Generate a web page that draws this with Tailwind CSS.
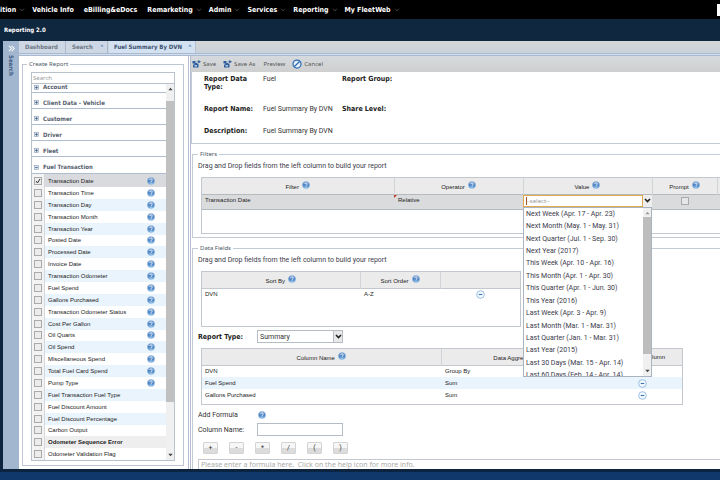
<!DOCTYPE html>
<html lang="en">
<head>
<meta charset="utf-8">
<title>Reporting 2.0</title>
<script src="https://cdn.jsdelivr.net/npm/@tailwindcss/browser@4"></script>
</head>
<body class="flex h-screen flex-col overflow-hidden bg-[#10284a] font-['Roboto','Liberation_Sans',sans-serif] text-[7px] leading-[8px] text-[#333]">
<svg class="absolute h-0 w-0" aria-hidden="true">
  <defs>
    <linearGradient id="ball" x1="0" y1="0" x2="0" y2="1"><stop offset="0" stop-color="#7ba6d6"/><stop offset=".5" stop-color="#4a80c0"/><stop offset="1" stop-color="#8cc4ee"/></linearGradient>
  </defs>
  <symbol id="help" viewBox="0 0 16 16"><circle cx="8" cy="8" r="7.2" fill="url(#ball)" stroke="#8fb4dc"/><path d="M5.500 6.200C5.500 2.800 10.800 3 10.500 6.200C10.300 7.800 8 7.800 8 9.800M8 11.400V13" fill="none" stroke="#fff" stroke-width="1.700"/></symbol>
  <symbol id="chev" viewBox="0 0 8 6"><path d="M1 1l3 3.400L7 1" fill="none" stroke="#666" stroke-width="1"/></symbol>
  <symbol id="pick" viewBox="0 0 8 6"><path d="M1 1.200l3 3L7 1.200" fill="none" stroke="#222" stroke-width="2"/></symbol>
  <symbol id="minus" viewBox="0 0 16 16"><circle cx="8" cy="8" r="6.800" fill="#f5faff" stroke="#8db4de" stroke-width="1.500"/><path d="M4.800 8h6.400" stroke="#3f74b3" stroke-width="2"/></symbol>
  <symbol id="save" viewBox="0 0 18 16"><path d="M1 2h6v4h4v2h2v7H2V9h3V7H1z" fill="#2d5e9e"/><rect x="5" y="10.500" width="5" height="2.500" fill="#d5e2f2"/><path d="M9 3.500h6M13 1l4 2.500L13 6z" fill="#2d5e9e" stroke="#2d5e9e" stroke-width="1.200"/></symbol>
  <symbol id="plusbox" viewBox="0 0 12 12"><rect x="1" y="1" width="10" height="10" fill="#dbe5f2" stroke="#8798b0" stroke-width="1.400"/><path d="M3 6h6M6 3v6" stroke="#34537d" stroke-width="1.800"/></symbol>
  <symbol id="minusbox" viewBox="0 0 12 12"><rect x="1" y="1" width="10" height="10" fill="#dbe5f2" stroke="#8798b0" stroke-width="1.400"/><path d="M3 6h6" stroke="#34537d" stroke-width="1.800"/></symbol>
  <symbol id="up" viewBox="0 0 8 6"><path d="M4 1l3.500 4h-7z" fill="currentColor"/></symbol>
  <symbol id="down" viewBox="0 0 8 6"><path d="M4 5l3.500-4h-7z" fill="currentColor"/></symbol>
</svg>

<nav class="flex h-[19px] shrink-0 items-center justify-between overflow-hidden bg-black font-['DejaVu_Sans_Condensed','DejaVu_Sans',sans-serif] font-bold text-white">
  <div class="flex items-center gap-[7px] whitespace-nowrap">
    <a href="#" class="flex items-center gap-[3px]">ition<svg class="h-[4px] w-[6px]"><use href="#chev"/></svg></a>
    <a href="#">Vehicle Info</a>
    <a href="#" class="mx-[3px]">eBilling&amp;eDocs</a>
    <a href="#" class="flex items-center gap-[3px]">Remarketing<svg class="h-[4px] w-[6px]"><use href="#chev"/></svg></a>
    <a href="#" class="flex items-center gap-[3px]">Admin<svg class="h-[4px] w-[6px]"><use href="#chev"/></svg></a>
    <a href="#" class="flex items-center gap-[3px]">Services<svg class="h-[4px] w-[6px]"><use href="#chev"/></svg></a>
    <a href="#" class="flex items-center gap-[3px]">Reporting<svg class="h-[4px] w-[6px]"><use href="#chev"/></svg></a>
    <a href="#" class="flex items-center gap-[3px]">My FleetWeb<svg class="h-[4px] w-[6px]"><use href="#chev"/></svg></a>
  </div>
  <span class="h-[12px] w-[3px] bg-white"></span>
</nav>
<header class="flex h-[22px] shrink-0 items-center bg-[#10283f] pl-1">
  <h1 class="font-['DejaVu_Sans_Condensed','DejaVu_Sans',sans-serif] text-[6px] font-bold text-white">Reporting 2.0</h1>
</header>

<div class="flex min-h-0 flex-1 border-l-[3px] border-[#0c2440]">
  <aside class="flex w-4 shrink-0 flex-col items-center bg-[#a3b6cf] pt-[4px]">
    <svg class="h-[7px] w-[7px]" viewBox="0 0 8 8"><path d="M1 1l3 3-3 3M4.200 1l3 3-3 3" fill="none" stroke="#fff" stroke-width="1.200"/></svg>
    <span class="mt-[3px] font-['DejaVu_Sans_Condensed','DejaVu_Sans',sans-serif] text-[6px] font-bold text-[#3d5b86] [writing-mode:vertical-rl]">Search</span>
  </aside>

  <div class="flex min-w-0 flex-1 flex-col">
    <div class="flex h-[15px] shrink-0 flex-col bg-[#cdd3d9]">
      <div class="flex h-[12px] bg-linear-to-b from-[#d6d6d6] to-[#c9d2da] font-['DejaVu_Sans_Condensed','DejaVu_Sans',sans-serif] text-[6px] font-bold text-[#6d7784]">
        <a href="#" class="flex w-[47px] items-center border-r border-[#a9b8ca] bg-[#cdd8e4] pl-[6px]">Dashboard</a>
        <a href="#" class="flex w-[42px] items-center justify-between border-r border-[#a9b8ca] bg-[#cdd8e4] pr-[3px] pl-[6px]">Search<svg class="mb-[3px] h-[3px] w-[4px] text-[#7295c4]"><use href="#up"/></svg></a>
        <a href="#" class="ml-px flex w-[87px] items-center justify-between border-r border-[#b4c3d4] bg-[#d3e1f1] pr-[3px] pl-[5px] text-[#3c5170]">Fuel Summary By DVN<svg class="mb-[3px] h-[3px] w-[4px] text-[#7295c4]"><use href="#up"/></svg></a>
      </div>
      <div class="h-[3px] border-y border-[#a9b9d2] bg-[#d3deeb]"></div>
    </div>

    <div class="flex min-h-0 flex-1 bg-white">
      <section class="flex w-[170px] shrink-0 flex-col border-r border-[#b3bfd0] pt-[4px] pr-[4px] pb-[3px] pl-[3px]">
        <fieldset class="flex min-h-0 flex-1 flex-col border border-[#bcc7d3] pr-[8px] pb-[4px] pl-[8px]">
          <legend class="-ml-[4px] px-[2px] font-['Noto_Sans',sans-serif] text-[6px] text-[#4c5866]">Create Report</legend>
          <input type="search" aria-label="Search fields" placeholder="Search" class="mt-[4px] h-[12px] w-full shrink-0 border border-[#b9c2cc] px-px font-['Noto_Sans',sans-serif] text-[6px] placeholder:text-[#999]">
          <div class="flex min-h-0 flex-1 border border-t-0 border-[#b9c2cc]">
            <div class="flex min-w-0 flex-1 flex-col">
              <div class="shrink-0 font-['DejaVu_Sans_Condensed','DejaVu_Sans',sans-serif] text-[6px] font-bold text-[#56606e]">
                <div class="flex h-[9px] items-end overflow-hidden border-b border-[#aebdd0]"><span class="flex items-center gap-[4px] pb-px pl-[2px]"><svg class="h-[5px] w-[5px]"><use href="#plusbox"/></svg>Account</span></div>
                <div class="flex h-4 items-center gap-[4px] border-b border-[#aebdd0] pt-[4px] pl-[2px]"><svg class="h-[5px] w-[5px]"><use href="#plusbox"/></svg>Client Data - Vehicle</div>
                <div class="flex h-4 items-center gap-[4px] border-b border-[#aebdd0] pt-[4px] pl-[2px]"><svg class="h-[5px] w-[5px]"><use href="#plusbox"/></svg>Customer</div>
                <div class="flex h-4 items-center gap-[4px] border-b border-[#aebdd0] pt-[4px] pl-[2px]"><svg class="h-[5px] w-[5px]"><use href="#plusbox"/></svg>Driver</div>
                <div class="flex h-4 items-center gap-[4px] border-b border-[#aebdd0] pt-[4px] pl-[2px]"><svg class="h-[5px] w-[5px]"><use href="#plusbox"/></svg>Fleet</div>
                <div class="flex h-[17px] items-center gap-[4px] border-b border-[#aebdd0] pt-[4px] pl-[2px]"><svg class="h-[5px] w-[5px]"><use href="#minusbox"/></svg>Fuel Transaction</div>
              </div>
              <ul id="fields" class="flex min-h-0 flex-1 flex-col font-['Liberation_Sans',sans-serif] text-[6px] text-[#222]"></ul>
            </div>
            <div class="flex w-[8px] flex-col items-center bg-[#f0f0f0] py-[3px] text-[#444]">
              <svg class="h-[4px] w-[5px]"><use href="#up"/></svg>
              <span class="mt-[10px] mb-[51px] w-full flex-1 bg-[#c0c0c0]"></span>
              <svg class="h-[4px] w-[5px]"><use href="#down"/></svg>
            </div>
          </div>
        </fieldset>
      </section>

      <main class="ml-px flex min-w-0 flex-1 flex-col overflow-hidden border-l border-[#b3bfd0]">
        <div class="flex h-4 shrink-0 items-center bg-linear-to-b from-[#d6dade] to-[#cfcfcf] pl-px font-['Noto_Sans',sans-serif] text-[6px] text-[#555]">
          <button class="flex items-center gap-[2px]"><svg class="h-[8px] w-[9px]"><use href="#save"/></svg>Save</button>
          <button class="ml-[7px] flex items-center gap-[2px]"><svg class="h-[8px] w-[9px]"><use href="#save"/></svg>Save As</button>
          <button class="ml-[8px]">Preview</button>
          <button class="ml-[7px] flex items-center gap-[2px]"><svg class="h-[10px] w-[10px]" viewBox="0 0 20 20"><circle cx="10" cy="10" r="8" fill="#e6effa" stroke="#2c69b0" stroke-width="2.500"/><path d="M4.500 15.500l11-11" stroke="#2c69b0" stroke-width="2.500"/></svg>Cancel</button>
        </div>

        <dl class="grid shrink-0 grid-cols-[59px_79px_60px_1fr] gap-y-[14px] border-b border-l border-[#c3ccd6] pt-[3px] pb-[8px] pl-[12px] [&>dt]:font-['DejaVu_Sans_Condensed','DejaVu_Sans',sans-serif] [&>dt]:font-bold [&>dt]:text-[#222]">
          <dt>Report Data Type:</dt><dd>Fuel</dd><dt>Report Group:</dt><dd></dd>
          <dt>Report Name:</dt><dd>Fuel Summary By DVN</dd><dt>Share Level:</dt><dd></dd>
          <dt>Description:</dt><dd>Fuel Summary By DVN</dd>
        </dl>

        <fieldset class="mt-[6px] ml-px shrink-0 border border-r-0 border-[#c3ccd6] pb-[3px] pl-[5px]">
          <legend class="px-[2px] font-['Noto_Sans',sans-serif] text-[6px] text-[#4c5866]">Filters</legend>
          <p class="mt-[4px] text-[#3c3c4c]">Drag and Drop fields from the left column to build your report</p>
          <div class="mt-[7px] ml-[3px] h-[57px] border border-r-0 border-[#c3c8ce]">
            <table class="w-full table-fixed border-collapse font-['Liberation_Sans',sans-serif] text-[6px] text-[#222]">
              <colgroup><col class="w-[192px]"><col class="w-[129px]"><col class="w-[129px]"><col class="w-[65px]"><col></colgroup>
              <thead><tr class="h-[16px] border-b border-[#b5babf] bg-[#ebebeb]">
                <th class="border-r border-[#d0d4d8] pt-[2px] font-normal"><span class="flex items-center justify-center gap-[3px]">Filter<svg class="mb-[3px] h-[8px] w-[8px]"><use href="#help"/></svg></span></th>
                <th class="border-r border-[#d0d4d8] pt-[2px] font-normal"><span class="flex items-center justify-center gap-[3px]">Operator<svg class="mb-[3px] h-[8px] w-[8px]"><use href="#help"/></svg></span></th>
                <th class="border-r border-[#d0d4d8] pt-[2px] font-normal"><span class="flex items-center justify-center gap-[3px]">Value<svg class="mb-[3px] h-[8px] w-[8px]"><use href="#help"/></svg></span></th>
                <th class="border-r border-[#d0d4d8] pt-[2px] font-normal"><span class="flex items-center justify-center gap-[3px]">Prompt<svg class="mb-[3px] h-[8px] w-[8px]"><use href="#help"/></svg></span></th>
                <th></th>
              </tr></thead>
              <tbody><tr class="h-[15px] border-b border-[#b5babf] bg-[#dadbdc] align-top">
                <td class="pt-px pl-[3px]">Transaction Date</td>
                <td class="relative pt-px pl-[4px]"><span class="absolute top-0 left-0 border-t-[3px] border-r-[3px] border-t-[#c0392b] border-r-transparent"></span>Relative</td>
                <td class="relative">
                  <div class="flex h-[12px] bg-white">
                    <input type="text" role="combobox" aria-expanded="true" aria-controls="ranges" aria-label="Value" placeholder="--select--" class="min-w-0 flex-1 border border-[#e3a94c] px-[2px] font-['Noto_Sans',sans-serif] text-[6px] placeholder:text-[#999]">
                    <button aria-label="Open list" class="flex w-[9px] items-center justify-center bg-[#eee]"><svg class="h-[5px] w-[7px]"><use href="#pick"/></svg></button>
                  </div>
                  <span class="absolute top-[2px] left-[3px] h-[8px] w-px bg-[#a35a2a]"></span>
                  <div class="absolute top-[12px] right-0 left-0 z-10 flex h-[170px] overflow-hidden border border-[#aab4c0] bg-white">
                    <ul id="ranges" role="listbox" class="grid h-[174px] flex-1 auto-rows-fr items-center pl-[2px] font-['Roboto','Liberation_Sans',sans-serif] text-[7px] whitespace-nowrap text-[#3a3a4a]">
                      <li role="option">Next Week (Apr. 17 - Apr. 23)</li>
                      <li role="option">Next Month (May. 1 - May. 31)</li>
                      <li role="option">Next Quarter (Jul. 1 - Sep. 30)</li>
                      <li role="option">Next Year (2017)</li>
                      <li role="option">This Week (Apr. 10 - Apr. 16)</li>
                      <li role="option">This Month (Apr. 1 - Apr. 30)</li>
                      <li role="option">This Quarter (Apr. 1 - Jun. 30)</li>
                      <li role="option">This Year (2016)</li>
                      <li role="option">Last Week (Apr. 3 - Apr. 9)</li>
                      <li role="option">Last Month (Mar. 1 - Mar. 31)</li>
                      <li role="option">Last Quarter (Jan. 1 - Mar. 31)</li>
                      <li role="option">Last Year (2015)</li>
                      <li role="option">Last 30 Days (Mar. 15 - Apr. 14)</li>
                      <li role="option">Last 60 Days (Feb. 14 - Apr. 14)</li>
                    </ul>
                    <div class="flex w-[8px] flex-col items-center bg-[#f0f0f0] py-[3px] text-[#444]">
                      <svg class="h-[4px] w-[5px] text-[#999]"><use href="#up"/></svg>
                      <span class="mt-[2px] mb-[15px] w-full flex-1 bg-[#bdbdbd]"></span>
                      <svg class="h-[4px] w-[5px]"><use href="#down"/></svg>
                    </div>
                  </div>
                </td>
                <td class="pt-[2px]"><input type="checkbox" aria-label="Prompt" class="mx-auto block h-[8px] w-[8px] appearance-none border border-[#aaa] bg-[#e6e6e6]"></td>
                <td></td>
              </tr></tbody>
            </table>
          </div>
        </fieldset>

        <fieldset class="mt-[6px] ml-px shrink-0 border border-r-0 border-[#c3ccd6] pl-[5px]">
          <legend class="px-[2px] font-['Noto_Sans',sans-serif] text-[6px] text-[#4c5866]">Data Fields</legend>
          <p class="mt-[4px] text-[#3c3c4c]">Drag and Drop fields from the left column to build your report</p>
          <div class="mt-[7px] ml-[3px] h-[56px] w-[320px] border border-[#c3c8ce]">
            <table class="w-full table-fixed border-collapse font-['Liberation_Sans',sans-serif] text-[6px] text-[#222]">
              <colgroup><col class="w-[158px]"><col class="w-[80px]"><col></colgroup>
              <thead><tr class="h-[16px] border-b border-[#c3c8ce] bg-[#ebebeb]">
                <th class="border-r border-[#d0d4d8] pt-[2px] font-normal"><span class="flex items-center justify-center gap-[3px]">Sort By<svg class="mb-[3px] h-[8px] w-[8px]"><use href="#help"/></svg></span></th>
                <th class="border-r border-[#d0d4d8] pt-[2px] font-normal"><span class="flex items-center justify-center gap-[3px]">Sort Order<svg class="mb-[3px] h-[8px] w-[8px]"><use href="#help"/></svg></span></th>
                <th></th>
              </tr></thead>
              <tbody><tr class="h-[12px]"><td class="pl-[3px]">DVN</td><td class="pl-[4px]">A-Z</td><td><button aria-label="Remove sort" class="mx-auto block"><svg class="h-[9px] w-[9px]"><use href="#minus"/></svg></button></td></tr></tbody>
            </table>
          </div>
          <div class="mt-[3px] flex h-[13px] items-center">
            <label for="rtype" class="w-[59px] font-['DejaVu_Sans_Condensed','DejaVu_Sans',sans-serif] font-bold text-[#222]">Report Type:</label>
            <div class="relative h-full w-[86px]">
              <select id="rtype" class="block h-full w-full appearance-none border border-[#b5bcc5] bg-white pl-[2px] text-[7px]"><option>Summary</option></select>
              <span class="pointer-events-none absolute top-px right-px bottom-px flex w-[9px] items-center justify-center border-l border-[#b5bcc5] bg-[#e8e8e8]"><svg class="h-[5px] w-[7px]"><use href="#pick"/></svg></span>
            </div>
          </div>
          <div class="mt-[5px] ml-[3px] h-[57px] w-[482px] border border-[#c3c8ce]">
            <table class="w-full table-fixed border-collapse font-['Liberation_Sans',sans-serif] text-[6px] text-[#222]">
              <colgroup><col class="w-[239px]"><col class="w-[162px]"><col></colgroup>
              <thead><tr class="h-[16px] border-b border-[#c3c8ce] bg-[#ebebeb]">
                <th class="border-r border-[#d0d4d8] pt-[2px] font-normal"><span class="flex items-center justify-center gap-[3px]">Column Name<svg class="mb-[3px] h-[8px] w-[8px]"><use href="#help"/></svg></span></th>
                <th class="border-r border-[#d0d4d8] pt-[2px] font-normal"><span class="flex items-center justify-center gap-[3px]">Data Aggregation<svg class="mb-[3px] h-[8px] w-[8px]"><use href="#help"/></svg></span></th>
                <th class="font-normal">Remove Column</th>
              </tr></thead>
              <tbody>
                <tr class="h-[12px]"><td class="pl-[3px]">DVN</td><td class="pl-[4px]">Group By</td><td></td></tr>
                <tr class="h-[12px] bg-[#eaf4fd]"><td class="pl-[3px]">Fuel Spend</td><td class="pl-[4px]">Sum</td><td><button aria-label="Remove Fuel Spend" class="mx-auto block"><svg class="h-[9px] w-[9px]"><use href="#minus"/></svg></button></td></tr>
                <tr class="h-[12px]"><td class="pl-[3px]">Gallons Purchased</td><td class="pl-[4px]">Sum</td><td><button aria-label="Remove Gallons Purchased" class="mx-auto block"><svg class="h-[9px] w-[9px]"><use href="#minus"/></svg></button></td></tr>
              </tbody>
            </table>
          </div>
          <div class="mt-[6px] flex h-[8px] items-center"><span class="w-[60px]">Add Formula</span><svg class="h-[8px] w-[8px]"><use href="#help"/></svg></div>
          <div class="mt-[4px] flex h-[13px] items-center">
            <label for="cname" class="w-[59px]">Column Name:</label>
            <input id="cname" type="text" class="h-full w-[86px] border border-[#b5bcc5]">
          </div>
          <div class="mt-[6px] flex gap-[11px] pl-[5px] text-[#333] [&>button]:h-[12px] [&>button]:w-[15px] [&>button]:rounded-[1px] [&>button]:border [&>button]:border-[#d4d4d4] [&>button]:bg-linear-to-b [&>button]:from-[#f6f6f6] [&>button]:from-50% [&>button]:to-[#dcdcdc] [&>button]:to-50%">
            <button>+</button><button>-</button><button>*</button><button>/</button><button>(</button><button>)</button>
          </div>
          <textarea aria-label="Formula" placeholder="Please enter a formula here.  Click on the help icon for more info." class="mt-[5px] block h-[40px] w-full resize-none border border-r-0 border-[#c3c8ce] px-[2px] py-px font-['Noto_Sans',sans-serif] text-[7px] placeholder:text-[#aaa]"></textarea>
        </fieldset>
      </main>
    </div>
  </div>
</div>
<footer class="h-[11px] shrink-0 border-t-[3px] border-[#0c2440] bg-[#10386a]"></footer>

<script>
const fields = ["Transaction Date","Transaction Time","Transaction Day","Transaction Month","Transaction Year","Posted Date","Processed Date","Invoice Date","Transaction Odometer","Fuel Spend","Gallons Purchased","Transaction Odometer Status","Cost Per Gallon","Oil Quarts","Oil Spend","Miscellaneous Spend","Total Fuel Card Spend","Pump Type","Fuel Transaction Fuel Type","Fuel Discount Amount","Fuel Discount Percentage","Carbon Output","Odometer Sequence Error","Odometer Validation Flag"];
document.getElementById("fields").innerHTML = fields.map((name, i) => {
  const row = i === 0 ? "h-[13px] shrink-0 bg-[#d8dadd]" : i === 22 ? "flex-1 bg-[#eeeeee] font-bold" : i % 2 ? "flex-1 bg-white" : "flex-1 bg-[#eaf4fd]";
  const tick = i === 0 ? '<svg class="pointer-events-none absolute top-px left-px h-[6px] w-[6px]" viewBox="0 0 6 6"><path d="M1 3l1.500 2L5 1" fill="none" stroke="#333"/></svg>' : "";
  const help = i < 18 ? '<svg class="h-[8px] w-[8px]"><use href="#help"/></svg>' : "";
  return `<li class="flex items-center ${row}">
    <span class="flex h-full w-[13px] items-center justify-center border-r border-[#d5d8dc] bg-[#f3f3f3]"><span class="relative h-[8px] w-[8px]"><input type="checkbox" id="f${i}" ${i === 0 ? "checked" : ""} class="block h-[8px] w-[8px] appearance-none border border-[#aaa] bg-[#ececec]">${tick}</span></span>
    <label for="f${i}" class="w-[102px] pl-[3px] whitespace-nowrap">${name}</label>${help}</li>`;
}).join("");
</script>
</body>
</html>
